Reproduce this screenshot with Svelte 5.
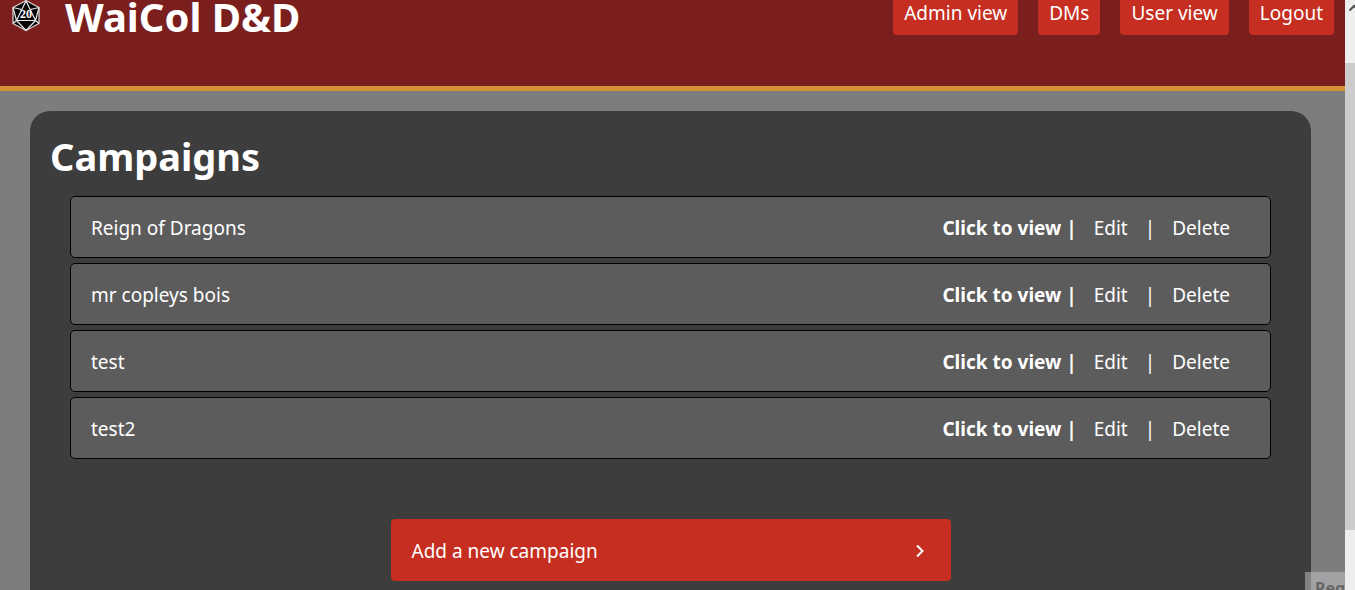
<script>
  const links = ['Admin view', 'DMs', 'User view', 'Logout'];
  const campaigns = ['Reign of Dragons', 'mr copleys bois', 'test', 'test2'];
</script>

<div class="window">
  <div class="page">
    <header>
      <svg class="logo" viewBox="0 0 28 32" aria-hidden="true">
        <path d="M14 0.500 27 7.500V23.500L14 30.500 1 23.500V7.500Z" fill="#050505" stroke="#d8cccc" stroke-width="1.300" stroke-linejoin="round" />
        <path d="M14 1 4.500 20.500H23.500ZM1 7.500 9.500 9.500M27 7.500 18.500 9.500M4.500 20.500 1 23.500M23.500 20.500 27 23.500M4.500 20.500 14 30.500 23.500 20.500M1 7.500 4.500 20.500M27 7.500 23.500 20.500" fill="none" stroke="#e8e8e8" stroke-width="1.200" stroke-linejoin="round" />
        <text x="14" y="18" text-anchor="middle">20</text>
      </svg>
      <h1>WaiCol D&amp;D</h1>
      <nav>
        {#each links as link}
          <a href="#top">{link}</a>
        {/each}
      </nav>
    </header>

    <main>
      <section>
        <h2>Campaigns</h2>
        <ul>
          {#each campaigns as name}
            <li>
              <span class="name">{name}</span>
              <a href="#view"><b>Click to view |</b></a>
              <a class="edit" href="#edit">Edit</a>
              <span class="bar">|</span>
              <a href="#delete">Delete</a>
            </li>
          {/each}
        </ul>
        <button type="button">
          Add a new campaign
          <svg width="8" height="14" viewBox="0 0 8 14" aria-hidden="true">
            <path d="M1 1.500 6.500 7 1 12.500" fill="none" stroke="#fff" stroke-width="2" />
          </svg>
        </button>
      </section>
    </main>
    <div class="notice">Regi</div>
  </div>

  <div class="scroll" aria-hidden="true">
    <svg width="10" height="14" viewBox="0 0 10 14">
      <path d="M4.500 10.500 9 6 13.500 10.500" fill="none" stroke="#505050" stroke-width="2" />
    </svg>
    <div class="thumb"></div>
  </div>
</div>

<style>
  :global(body) {
    margin: 0;
  }

  .window {
    display: flex;
    height: 100vh;
    overflow: hidden;
    font: 19px/26px "Segoe UI", "Noto Sans", "Open Sans", sans-serif;
    color: #fff;
  }

  .page {
    position: relative;
    display: flex;
    flex-direction: column;
    flex: 1;
    min-width: 0;
    overflow: hidden;
    background: #7d7d7d;
  }

  header {
    display: flex;
    flex-shrink: 0;
    align-items: flex-start;
    box-sizing: border-box;
    height: 91px;
    padding: 0 11px 0 12px;
    background: #7a1f1e;
    border-bottom: 5px solid #d69035;
  }

  .logo {
    width: 28px;
    height: 32px;
    margin-right: 25px;
  }

  .logo text {
    font: bold 12px "Liberation Serif", serif;
    fill: #fff;
  }

  h1,
  h2 {
    margin: 0;
    line-height: 34px;
    font-weight: 700;
  }

  h1 {
    font-size: 40px;
  }

  h2 {
    font-size: 38px;
  }

  nav {
    display: flex;
    gap: 20px;
    margin-left: auto;
  }

  a {
    color: inherit;
    text-decoration: none;
    white-space: nowrap;
  }

  nav a {
    padding: 0 11px 9px;
    border-radius: 0 0 4px 4px;
    background: #c52e20;
  }

  main {
    flex: 1 0 auto;
    display: flex;
    padding: 20px 34px 0 30px;
  }

  section {
    flex: 1;
    min-width: 0;
    padding: 28px 20px 30px;
    border-radius: 20px 20px 0 0;
    background: #3d3d3d;
  }

  ul {
    display: grid;
    gap: 5px;
    margin: 23px 20px 60px;
    padding: 0;
    list-style: none;
  }

  li {
    display: flex;
    align-items: center;
    box-sizing: border-box;
    height: 62px;
    padding: 2px 40px 0 20px;
    border: 1px solid #000;
    border-radius: 5px;
    background: #5c5c5c;
  }

  .name {
    margin-right: auto;
  }

  .edit {
    margin-left: 17px;
  }

  .bar {
    margin: 0 17px;
  }

  button {
    display: flex;
    align-items: center;
    justify-content: space-between;
    box-sizing: border-box;
    width: 560px;
    max-width: 100%;
    height: 62px;
    margin: 0 auto;
    padding: 2px 27px 0 21px;
    border: 0;
    border-radius: 4px;
    background: #c52e20;
    color: inherit;
    font: inherit;
  }

  .notice {
    position: absolute;
    right: 0;
    bottom: 0;
    box-sizing: border-box;
    width: 40px;
    height: 18px;
    padding: 4px 0 0 10px;
    overflow: hidden;
    background: rgba(200, 200, 204, 0.5);
    color: #666;
    font-size: 16px;
    line-height: 24px;
    font-weight: 700;
  }

  .scroll {
    display: flex;
    flex-direction: column;
    box-sizing: border-box;
    width: 10px;
    padding-bottom: 60px;
    background: #eee;
  }

  .scroll svg {
    margin-bottom: 49px;
  }

  .thumb {
    flex: 1;
    background: #ccc;
  }
</style>
